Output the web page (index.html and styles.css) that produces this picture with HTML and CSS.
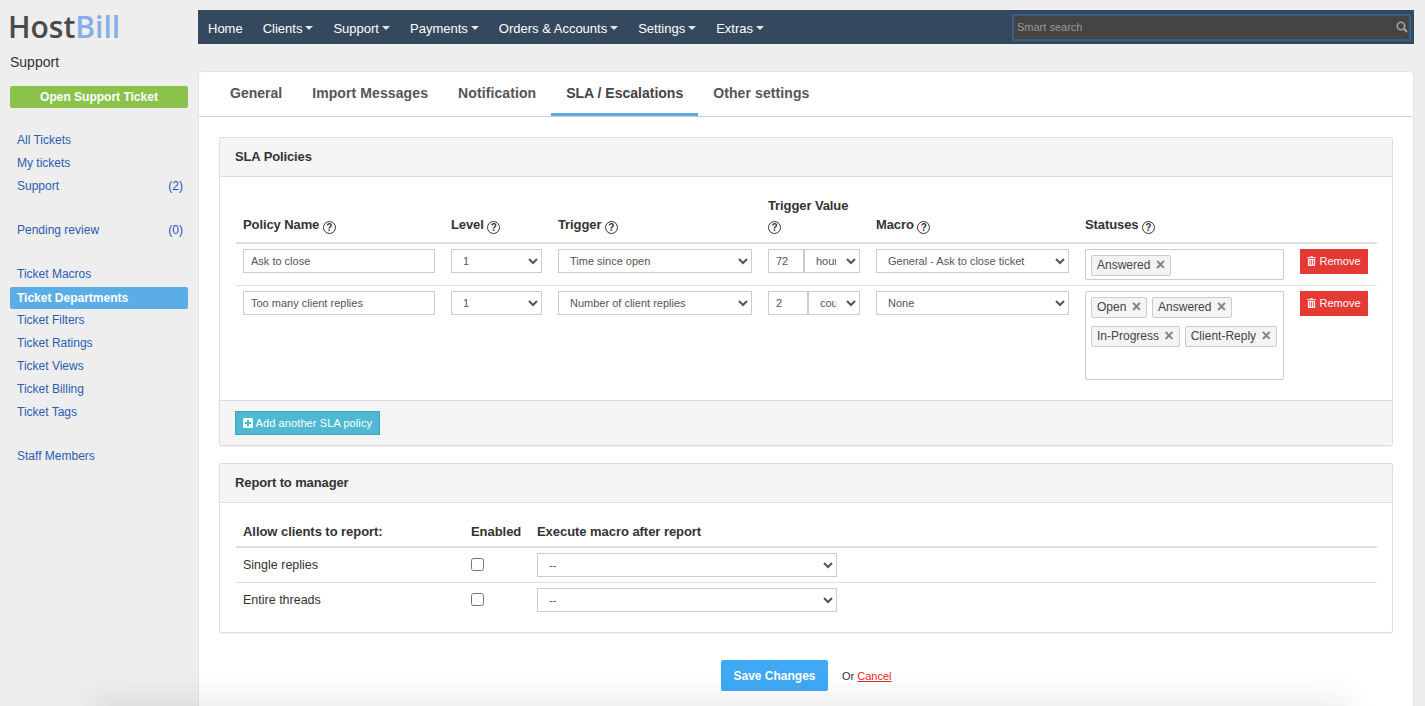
FILE: index.html
```html
<!DOCTYPE html>
<html lang="en">
<head>
  <meta charset="UTF-8">
  <meta name="viewport" content="width=device-width, initial-scale=1.0">
  <title>HostBill - SLA / Escalations</title>
  <link rel="stylesheet" href="styles.css">
</head>
<body>
  <div class="page">
    <aside class="sidebar">
      <div class="logo">Host<span class="logo__accent">Bill</span></div>
      <div class="sidebar__title">Support</div>
      <a class="open-ticket" href="#">Open Support Ticket</a>
      <ul class="side-menu">
        <li><a href="#">All Tickets</a></li>
        <li><a href="#">My tickets</a></li>
        <li><a href="#">Support</a><span>(2)</span></li>
      </ul>
      <ul class="side-menu">
        <li><a href="#">Pending review</a><span>(0)</span></li>
      </ul>
      <ul class="side-menu">
        <li><a href="#">Ticket Macros</a></li>
        <li class="active"><a href="#">Ticket Departments</a></li>
        <li><a href="#">Ticket Filters</a></li>
        <li><a href="#">Ticket Ratings</a></li>
        <li><a href="#">Ticket Views</a></li>
        <li><a href="#">Ticket Billing</a></li>
        <li><a href="#">Ticket Tags</a></li>
      </ul>
      <ul class="side-menu">
        <li><a href="#">Staff Members</a></li>
      </ul>
    </aside>

    <main class="content">
      <nav class="topbar">
        <a href="#" class="topbar__item">Home</a>
        <a href="#" class="topbar__item topbar__item--drop">Clients</a>
        <a href="#" class="topbar__item topbar__item--drop">Support</a>
        <a href="#" class="topbar__item topbar__item--drop">Payments</a>
        <a href="#" class="topbar__item topbar__item--drop">Orders &amp; Accounts</a>
        <a href="#" class="topbar__item topbar__item--drop">Settings</a>
        <a href="#" class="topbar__item topbar__item--drop">Extras</a>
        <div class="search">
          <span class="search__text">Smart search</span>
          <svg class="search__icon" viewBox="0 0 12 12" width="12" height="12">
            <circle cx="5" cy="5" r="3.7" fill="none" stroke="#a5a5a5" stroke-width="1.6"/>
            <path d="M7.8 7.8L11 11" stroke="#a5a5a5" stroke-width="2" fill="none"/>
          </svg>
        </div>
      </nav>

      <div class="card">
        <div class="tabs">
          <a href="#" class="tab">General</a>
          <a href="#" class="tab">Import Messages</a>
          <a href="#" class="tab">Notification</a>
          <a href="#" class="tab tab--active">SLA / Escalations</a>
          <a href="#" class="tab">Other settings</a>
        </div>

        <div class="card__body">
          <section class="panel">
            <h3 class="panel__head">SLA Policies</h3>
            <div class="panel__body panel__body--sla">
              <table class="grid grid--sla">
                <thead>
                  <tr>
                    <th class="col-name">Policy Name <i class="help">?</i></th>
                    <th class="col-level">Level <i class="help">?</i></th>
                    <th class="col-trigger">Trigger <i class="help">?</i></th>
                    <th class="col-value">Trigger Value <i class="help">?</i></th>
                    <th class="col-macro">Macro <i class="help">?</i></th>
                    <th class="col-status">Statuses <i class="help">?</i></th>
                    <th class="col-remove"></th>
                  </tr>
                </thead>
                <tbody>
                  <tr>
                    <td><input class="field field--name" type="text" value="Ask to close"></td>
                    <td><select class="field field--level"><option>1</option></select></td>
                    <td><select class="field field--trigger"><option>Time since open</option></select></td>
                    <td>
                      <div class="value-pair">
                        <input class="field field--num" type="text" value="72">
                        <select class="field field--unit"><option>hours</option></select>
                      </div>
                    </td>
                    <td><select class="field field--macro"><option>General - Ask to close ticket</option></select></td>
                    <td>
                      <div class="tag-box">
                        <span class="tag">Answered <b>&times;</b></span>
                      </div>
                    </td>
                    <td><a href="#" class="btn-remove"><svg viewBox="0 0 10 11" width="9" height="10"><path d="M3.500 1V.3h3V1H10v1H0V1zM1 3h8v7.200l-.7.8H1.700L1 10.200zm1.700 1.200v5.500h.9V4.200zm2 0v5.500h.9V4.200zm2 0v5.500h.9V4.200z" fill="#fff" fill-rule="evenodd"/></svg> Remove</a></td>
                  </tr>
                  <tr>
                    <td><input class="field field--name" type="text" value="Too many client replies"></td>
                    <td><select class="field field--level"><option>1</option></select></td>
                    <td><select class="field field--trigger"><option>Number of client replies</option></select></td>
                    <td>
                      <div class="value-pair value-pair--wide">
                        <input class="field field--num" type="text" value="2">
                        <select class="field field--unit"><option>count</option></select>
                      </div>
                    </td>
                    <td><select class="field field--macro"><option>None</option></select></td>
                    <td>
                      <div class="tag-box tag-box--tall">
                        <span class="tag">Open <b>&times;</b></span>
                        <span class="tag">Answered <b>&times;</b></span>
                        <span class="tag">In-Progress <b>&times;</b></span>
                        <span class="tag">Client-Reply <b>&times;</b></span>
                      </div>
                    </td>
                    <td><a href="#" class="btn-remove"><svg viewBox="0 0 10 11" width="9" height="10"><path d="M3.500 1V.3h3V1H10v1H0V1zM1 3h8v7.200l-.7.8H1.700L1 10.200zm1.700 1.200v5.500h.9V4.200zm2 0v5.500h.9V4.200zm2 0v5.500h.9V4.200z" fill="#fff" fill-rule="evenodd"/></svg> Remove</a></td>
                  </tr>
                </tbody>
              </table>
            </div>
            <div class="panel__foot">
              <a href="#" class="btn-add"><svg viewBox="0 0 10 10" width="10" height="10"><path d="M1.500 0h7A1.500 1.500 0 0 1 10 1.500v7A1.500 1.500 0 0 1 8.500 10h-7A1.500 1.500 0 0 1 0 8.500v-7A1.500 1.500 0 0 1 1.500 0zM4 2v2H2v2h2v2h2V6h2V4H6V2z" fill="#fff" fill-rule="evenodd"/></svg> Add another SLA policy</a>
            </div>
          </section>

          <section class="panel">
            <h3 class="panel__head">Report to manager</h3>
            <div class="panel__body panel__body--report">
              <table class="grid grid--report">
                <thead>
                  <tr>
                    <th class="col-allow">Allow clients to report:</th>
                    <th class="col-enabled">Enabled</th>
                    <th>Execute macro after report</th>
                  </tr>
                </thead>
                <tbody>
                  <tr>
                    <td>Single replies</td>
                    <td><input class="check" type="checkbox"></td>
                    <td><select class="field field--report"><option>--</option></select></td>
                  </tr>
                  <tr>
                    <td>Entire threads</td>
                    <td><input class="check" type="checkbox"></td>
                    <td><select class="field field--report"><option>--</option></select></td>
                  </tr>
                </tbody>
              </table>
            </div>
          </section>

          <div class="actions">
            <a href="#" class="btn-save">Save Changes</a>
            <span class="actions__or">Or <a href="#">Cancel</a></span>
          </div>
        </div>
      </div>
    </main>
  </div>
  <div class="bottom-shade"></div>
</body>
</html>
```

FILE: styles.css
```css
/* General styles */
html, body {
  margin: 0;
  height: 706px;
  overflow: hidden;
}

body {
  background: #eee;
  color: #333;
  font-family: "Liberation Sans", Arial, sans-serif;
  font-size: 12px;
  position: relative;
}

a {
  text-decoration: none;
}

.page {
  display: flex;
  align-items: flex-start;
  padding: 10px 11px 0 10px;
  gap: 10px;
}

/* Sidebar */
.sidebar {
  width: 178px;
  flex: none;
}

.logo {
  font-family: "Open Sans", sans-serif;
  font-weight: 600;
  font-size: 30px;
  line-height: 34px;
  color: #4b4b47;
  height: 34px;
  margin-left: -2px;
}

.logo__accent {
  color: #84afe9;
}

.sidebar__title {
  font-size: 14px;
  line-height: 16px;
  margin-top: 10px;
  color: #333;
}

.open-ticket {
  display: block;
  margin-top: 16px;
  height: 22px;
  line-height: 22px;
  text-align: center;
  background: #8bc34a;
  border-radius: 2px;
  color: #fff;
  font-weight: bold;
}

.side-menu {
  list-style: none;
  margin: 0 0 21px;
  padding: 0;
}

.sidebar .open-ticket + .side-menu {
  margin-top: 21px;
}

.side-menu li {
  display: flex;
  justify-content: space-between;
  height: 23px;
  line-height: 23px;
  padding: 0 5px 0 7px;
  color: #1f55b0;
}

.side-menu a {
  color: #2a5db0;
}

.side-menu li.active {
  background: #5bade6;
  border-radius: 2px;
  height: 22px;
  line-height: 22px;
  margin: 1px 0 0;
}

.side-menu li.active a {
  color: #fff;
  font-weight: bold;
}

/* Top navigation */
.content {
  width: 1216px;
  flex: none;
}

.topbar {
  display: flex;
  align-items: center;
  height: 34px;
  background: #34495e;
  padding-left: 10px;
}

.topbar__item {
  color: #fff;
  font-size: 13px;
  margin-right: 20px;
  padding-top: 2px;
}

.topbar__item--drop::after {
  content: "";
  display: inline-block;
  margin-left: 3px;
  vertical-align: 3px;
  border: 4px solid transparent;
  border-top-color: #e4e8ec;
  border-bottom: 0;
}

.search {
  margin-left: auto;
  margin-right: 3px;
  height: 23px;
  background: #444;
  border: 2px solid #3a5f85;
  display: flex;
  align-items: center;
  justify-content: space-between;
  padding: 0 1px 0 3px;
  width: 391px;
}

.search__text {
  color: #999;
  font-size: 11px;
}

/* Card and tabs */
.card {
  margin-top: 27px;
  background: #fff;
  border: 1px solid #e2e2e2;
  border-radius: 4px 4px 0 0;
  width: 1214px;
  height: 640px;
  overflow: hidden;
}

.tabs {
  display: flex;
  height: 44px;
  padding-left: 16px;
  border-bottom: 1px solid #d0d0d0;
}

.tab {
  padding: 0 15px;
  line-height: 43px;
  font-size: 14px;
  font-weight: bold;
  letter-spacing: .1px;
  color: #555;
}

.tab:first-child {
  letter-spacing: 0;
}

.tab--active {
  border-bottom: 3px solid #5aabe0;
  height: 41px;
  letter-spacing: 0;
  color: #444;
}

.card__body {
  padding: 20px 20px 0;
}

/* Panels */
.panel {
  border: 1px solid #ddd;
  border-radius: 2px;
  box-shadow: 0 1px 1px rgba(0,0,0,.05);
  margin-bottom: 17px;
}

.panel__head {
  margin: 0;
  line-height: 37px;
  padding-left: 15px;
  font-size: 13px;
  font-weight: bold;
  letter-spacing: -.12px;
  background: #f5f5f5;
  border-bottom: 1px solid #ddd;
  box-sizing: border-box;
  color: #333;
  height: 39px;
}

.panel__body--sla {
  padding: 19px 16px 0;
  height: 223px;
  box-sizing: border-box;
}

.panel__body--report {
  padding: 21px 16px 15px;
}

.panel__foot {
  background: #f5f5f5;
  border-top: 1px solid #ddd;
  height: 45px;
  box-sizing: border-box;
  padding: 10px 15px 0;
}

/* Tables */
.grid {
  border-collapse: collapse;
  table-layout: fixed;
  width: 1141px;
}

.grid th {
  text-align: left;
  font-size: 13px;
  font-weight: bold;
  padding: 0 7px;
  vertical-align: bottom;
  border-bottom: 2px solid #ddd;
  color: #333;
}

.grid--sla th {
  line-height: 19px;
  padding-bottom: 8px;
  letter-spacing: -.1px;
}

.grid--sla td {
  padding: 5px 7px;
  vertical-align: top;
  border-bottom: 1px solid #ddd;
  font-size: 11px;
}

.grid--sla tr:last-child td {
  border-bottom: 0;
}

.col-name { width: 194px; }
.col-level { width: 93px; }
.col-trigger { width: 196px; }
.col-value { width: 94px; }
.col-macro { width: 195px; }
.col-status { width: 201px; }

.grid--report th {
  line-height: 15px;
  padding-bottom: 7px;
  letter-spacing: -.05px;
}

.grid--report td {
  padding: 5px 7px;
  font-size: 12.5px;
  border-bottom: 1px solid #ddd;
  height: 24px;
  color: #333;
}

.grid--report tr:last-child td {
  border-bottom: 0;
}

.col-allow { width: 214px; }
.col-enabled { width: 52px; }

.help {
  display: inline-block;
  width: 11px;
  height: 11px;
  line-height: 11px;
  border: 1.3px solid #333;
  border-radius: 50%;
  font-size: 10px;
  font-style: normal;
  font-weight: bold;
  text-align: center;
  vertical-align: -2px;
  margin-left: 0;
  letter-spacing: 0;
}

/* Form controls */
.field {
  font-family: "Liberation Sans", Arial, sans-serif;
  font-size: 11px;
  color: #555;
  height: 24px;
  border: 1px solid #ccc;
  background: #fff;
  box-sizing: border-box;
  border-radius: 0;
  display: block;
  outline: 0;
}

input.field {
  padding: 0 7px;
}

select.field {
  padding: 0 7px;
}

.field--name { width: 192px; }
.field--level { width: 91px; }
.field--trigger { width: 194px; }
.field--macro { width: 193px; }
.field--report { width: 300px; }

.value-pair {
  display: flex;
  width: 92px;
}

.field--num {
  width: 36px;
}

.value-pair--wide .field--num {
  width: 40px;
}

.field--unit {
  flex: 1;
  min-width: 0;
  margin-left: 0;
}

.check {
  display: block;
  width: 13px;
  height: 13px;
  margin: -1px 0 0;
}

.tag-box {
  display: flex;
  flex-wrap: wrap;
  align-content: flex-start;
  gap: 8px 5px;
  width: 199px;
  height: 31px;
  padding: 5px 2px 5px 5px;
  border: 1px solid #ccc;
  border-radius: 2px;
  box-sizing: border-box;
}

.tag-box--tall {
  height: 89px;
}

.tag {
  height: 21px;
  line-height: 19px;
  box-sizing: border-box;
  padding: 0 5px;
  background: #f4f4f4;
  border: 1px solid #ccc;
  border-radius: 2px;
  font-size: 12px;
  color: #444;
  white-space: nowrap;
}

.tag b {
  color: #808080;
  font-size: 16px;
  line-height: 0;
  vertical-align: -1px;
  margin-left: 2px;
}

/* Buttons */
.btn-remove {
  display: block;
  width: 68px;
  height: 25px;
  line-height: 24px;
  background: #e53935;
  color: #fff;
  font-size: 11px;
  text-align: center;
}

.btn-remove svg,
.btn-add svg {
  vertical-align: -1px;
}

.btn-add {
  display: inline-block;
  box-sizing: border-box;
  height: 24px;
  line-height: 22px;
  padding: 0 7px;
  background: #4fb9d4;
  border: 1px solid #3fa6bf;
  color: #fff;
  font-size: 11px;
  letter-spacing: .1px;
}

.actions {
  display: flex;
  align-items: center;
  margin-top: 27px;
  padding-left: 502px;
}

.btn-save {
  width: 107px;
  height: 31px;
  line-height: 32px;
  text-align: center;
  background: #3fa9f5;
  border-radius: 2px;
  color: #fff;
  font-weight: bold;
}

.actions__or {
  margin-left: 14px;
  font-size: 11px;
}

.actions__or a {
  color: #e8262a;
  text-decoration: underline;
}

.bottom-shade {
  position: absolute;
  left: 100px;
  right: 85px;
  bottom: -30px;
  height: 30px;
  box-shadow: 0 0 30px 10px rgba(0,0,0,.07);
  pointer-events: none;
}
```
